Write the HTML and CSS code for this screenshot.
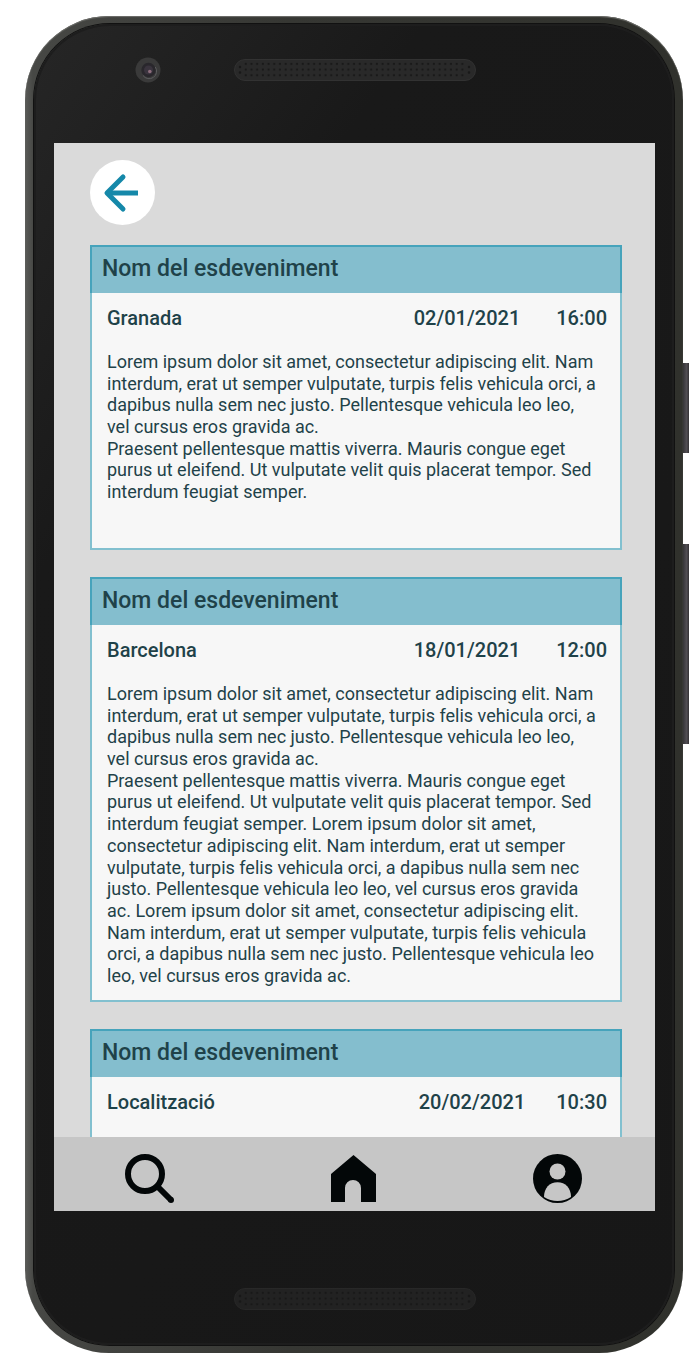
FILE: index.html
```html
<!DOCTYPE html>
<html lang="ca">
<head>
<meta charset="utf-8">
<meta name="viewport" content="width=device-width, initial-scale=1">
<title>Esdeveniments</title>
<link rel="stylesheet" href="styles.css">
</head>
<body>
<div class="phone">
  <span class="side-button side-button-power"></span>
  <span class="side-button side-button-volume"></span>
  <div class="body">
    <div class="bezel bezel-top">
      <svg class="camera" viewBox="0 0 26 26" aria-hidden="true">
        <circle cx="13" cy="13" r="12.5" fill="#3a3a3a"/>
        <circle cx="13.5" cy="13" r="7.2" fill="#29272c"/>
        <path d="M8 18.5A7.2 7.2 0 0 0 20.300 10" fill="none" stroke="#5c5c5e" stroke-width="1"/>
        <circle cx="13.500" cy="13" r="4.500" fill="#3a343e"/>
        <circle cx="14.800" cy="14.500" r="1.800" fill="#8d6d7c"/>
      </svg>
      <svg class="speaker" viewBox="0 0 242 22" aria-hidden="true">
        <defs>
          <pattern id="holes" x="9" y="2" width="5.700" height="5.700" patternUnits="userSpaceOnUse">
            <circle cx="2.800" cy="2.800" r="1.200" fill="#191919"/>
          </pattern>
        </defs>
        <rect x=".5" y=".5" width="241" height="21" rx="10.500" fill="#292929" stroke="#323232"/>
        <rect x="9" y="2" width="222.300" height="17.100" fill="url(#holes)"/>
        <g fill="#191919"><circle cx="6" cy="8" r="1.200"/><circle cx="6" cy="13.500" r="1.200"/><circle cx="235" cy="8" r="1.200"/><circle cx="235" cy="13.500" r="1.200"/></g>
      </svg>
    </div>

    <div class="screen">
      <main class="content">
        <button class="back" type="button" aria-label="Enrere">
          <svg viewBox="0 0 65 65" aria-hidden="true">
            <path d="M48 33H17" fill="none" stroke="#1588a9" stroke-width="5"/>
            <path d="M33 17 17 33 33 49" fill="none" stroke="#1588a9" stroke-width="5" stroke-linecap="round" stroke-linejoin="round"/>
          </svg>
        </button>

        <article class="event">
          <h2 class="event-name">Nom del esdeveniment</h2>
          <div class="event-body">
            <div class="event-info"><span class="place">Granada</span><time>02/01/2021</time><time>16:00</time></div>
            <p>Lorem ipsum dolor sit amet, consectetur adipiscing elit. Nam interdum, erat ut semper vulputate, turpis felis vehicula orci, a dapibus nulla sem nec justo. Pellentesque vehicula leo leo, vel cursus eros gravida ac.<br>Praesent pellentesque mattis viverra. Mauris congue eget purus ut eleifend. Ut vulputate velit quis placerat tempor. Sed interdum feugiat semper.</p>
          </div>
        </article>

        <article class="event">
          <h2 class="event-name">Nom del esdeveniment</h2>
          <div class="event-body">
            <div class="event-info"><span class="place">Barcelona</span><time>18/01/2021</time><time>12:00</time></div>
            <p>Lorem ipsum dolor sit amet, consectetur adipiscing elit. Nam interdum, erat ut semper vulputate, turpis felis vehicula orci, a dapibus nulla sem nec justo. Pellentesque vehicula leo leo, vel cursus eros gravida ac.<br>Praesent pellentesque mattis viverra. Mauris congue eget purus ut eleifend. Ut vulputate velit quis placerat tempor. Sed interdum feugiat semper. Lorem ipsum dolor sit amet, consectetur adipiscing elit. Nam interdum, erat ut semper vulputate, turpis felis vehicula orci, a dapibus nulla sem nec justo. Pellentesque vehicula leo leo, vel cursus eros gravida ac. Lorem ipsum dolor sit amet, consectetur adipiscing elit. Nam interdum, erat ut semper vulputate, turpis felis vehicula orci, a dapibus nulla sem nec justo. Pellentesque vehicula leo leo, vel cursus eros gravida ac.</p>
          </div>
        </article>

        <article class="event event-compact">
          <h2 class="event-name">Nom del esdeveniment</h2>
          <div class="event-body">
            <div class="event-info"><span class="place">Localització</span><time>20/02/2021</time><time>10:30</time></div>
          </div>
        </article>
      </main>

      <nav class="tabs">
        <a class="tab" href="#cerca" aria-label="Cerca">
          <svg viewBox="0 0 49 49" aria-hidden="true">
            <circle cx="20" cy="20" r="17" fill="none" stroke="#030708" stroke-width="6"/>
            <path d="m32.500 32.500 13.500 13.500" stroke="#030708" stroke-width="6"/>
            <circle cx="46" cy="46" r="3" fill="#030708"/>
          </svg>
        </a>
        <a class="tab" href="#inici" aria-label="Inici">
          <svg viewBox="0 0 49 49" aria-hidden="true">
            <path d="M24.500 1 47 20V48H32V34a8 8 0 0 0-16 0V48H2V20Z" fill="#030708"/>
          </svg>
        </a>
        <a class="tab" href="#perfil" aria-label="Perfil">
          <svg viewBox="0 0 49 49" aria-hidden="true">
            <circle cx="24.500" cy="24.500" r="24.500" fill="#030708"/>
            <circle cx="24.500" cy="17.500" r="8" fill="#c6c6c6"/>
            <path d="M11 43C11 34 16.500 28.200 24.500 28.200S38 34 38 43C30 48.200 19 48.200 11 43Z" fill="#c6c6c6"/>
          </svg>
        </a>
      </nav>
    </div>

    <div class="bezel bezel-bottom">
      <svg class="speaker speaker-dim" viewBox="0 0 242 22" aria-hidden="true">
        <rect x=".5" y=".5" width="241" height="21" rx="10.500" fill="#252525" stroke="#2c2c2c"/>
        <rect x="9" y="2" width="222.300" height="17.100" fill="url(#holes)"/>
        <g fill="#191919"><circle cx="6" cy="8" r="1.200"/><circle cx="6" cy="13.500" r="1.200"/><circle cx="235" cy="8" r="1.200"/><circle cx="235" cy="13.500" r="1.200"/></g>
      </svg>
    </div>
  </div>
</div>
</body>
</html>
```
FILE: styles.css
```css
* { box-sizing: border-box; }

body {
  margin: 0;
  height: 100vh;
  padding: 16px 17px 19px 25px;
  background: #fff;
  color: #1f4249;
  font-family: Roboto, "Noto Sans", sans-serif;
}

.phone {
  position: relative;
  height: 100%;
  padding: 8px 9px;
  border-radius: 84px;
  background: linear-gradient(90deg, #5a5b58 0, #474845 8px, #363733 40%, #30312c 100%);
  box-shadow: inset 0 1px 1px #70716d;
}

.body {
  display: flex;
  flex-direction: column;
  height: 100%;
  padding: 0 19px 0 20px;
  border-radius: 76px;
  background: linear-gradient(125deg, #262626 0, #191919 25%, #171717 100%);
  box-shadow: 0 0 0 1px #111, inset 0 0 0 2px #1d1d1d;
}

.side-button {
  position: absolute;
  left: 100%;
  width: 6px;
  background: linear-gradient(90deg, #353437, #514e53 60%, #343235);
}
.side-button-power { top: 347px; height: 90px; }
.side-button-volume { top: 528px; height: 200px; }

.bezel {
  display: grid;
  grid-template-columns: 1fr auto 1fr;
  align-items: center;
  flex: none;
}
.bezel-top { height: 119px; padding-bottom: 28px; }
.bezel-bottom { height: 134px; padding-top: 42px; }
.camera {
  width: 26px;
  height: 26px;
  margin-left: 8px;
  justify-self: center;
}
.speaker {
  grid-column: 2;
  width: 242px;
  height: 22px;
}
.speaker-dim { opacity: .8; }

.screen {
  display: flex;
  flex: 1;
  flex-direction: column;
  min-height: 0;
  background: #dadada;
}

.content {
  display: flex;
  flex: 1;
  flex-direction: column;
  align-items: stretch;
  gap: 27px;
  min-height: 0;
  padding: 17px 33px 0 36px;
  overflow: hidden;
}

.back {
  flex: none;
  width: 65px;
  height: 65px;
  margin-bottom: -7px;
  padding: 0;
  border: 0;
  border-radius: 50%;
  background: #fff;
}
.back svg { display: block; }

.event {
  flex: none;
  min-height: 305px;
  border: 2px solid #82c0cf;
  border-top: 0;
  background: #f7f7f7;
}
.event-name {
  height: 48px;
  margin: 0 -2px;
  padding-left: 10px;
  border: 2px solid #46a3bb;
  border-bottom: 0;
  background: #84bece;
  font-size: 23px;
  font-weight: 500;
  line-height: 44px;
}
.event-body { padding: 10px 13px 13px 15px; }
.event-info {
  display: flex;
  gap: 36px;
  font-size: 20px;
  font-weight: 500;
  line-height: 30px;
}
.event-compact .event-info { gap: 31px; }
.place { flex: 1; }
.event p {
  margin: 18px 0 0;
  padding-right: 8px;
  font-size: 18px;
  line-height: 1.205;
}

.tabs {
  display: flex;
  flex: none;
  align-items: center;
  justify-content: space-between;
  height: 74px;
  padding: 8px 73px 0 71px;
  background: #c6c6c6;
}
.tab {
  display: block;
  width: 49px;
  height: 49px;
}
.tab svg { display: block; }
```
